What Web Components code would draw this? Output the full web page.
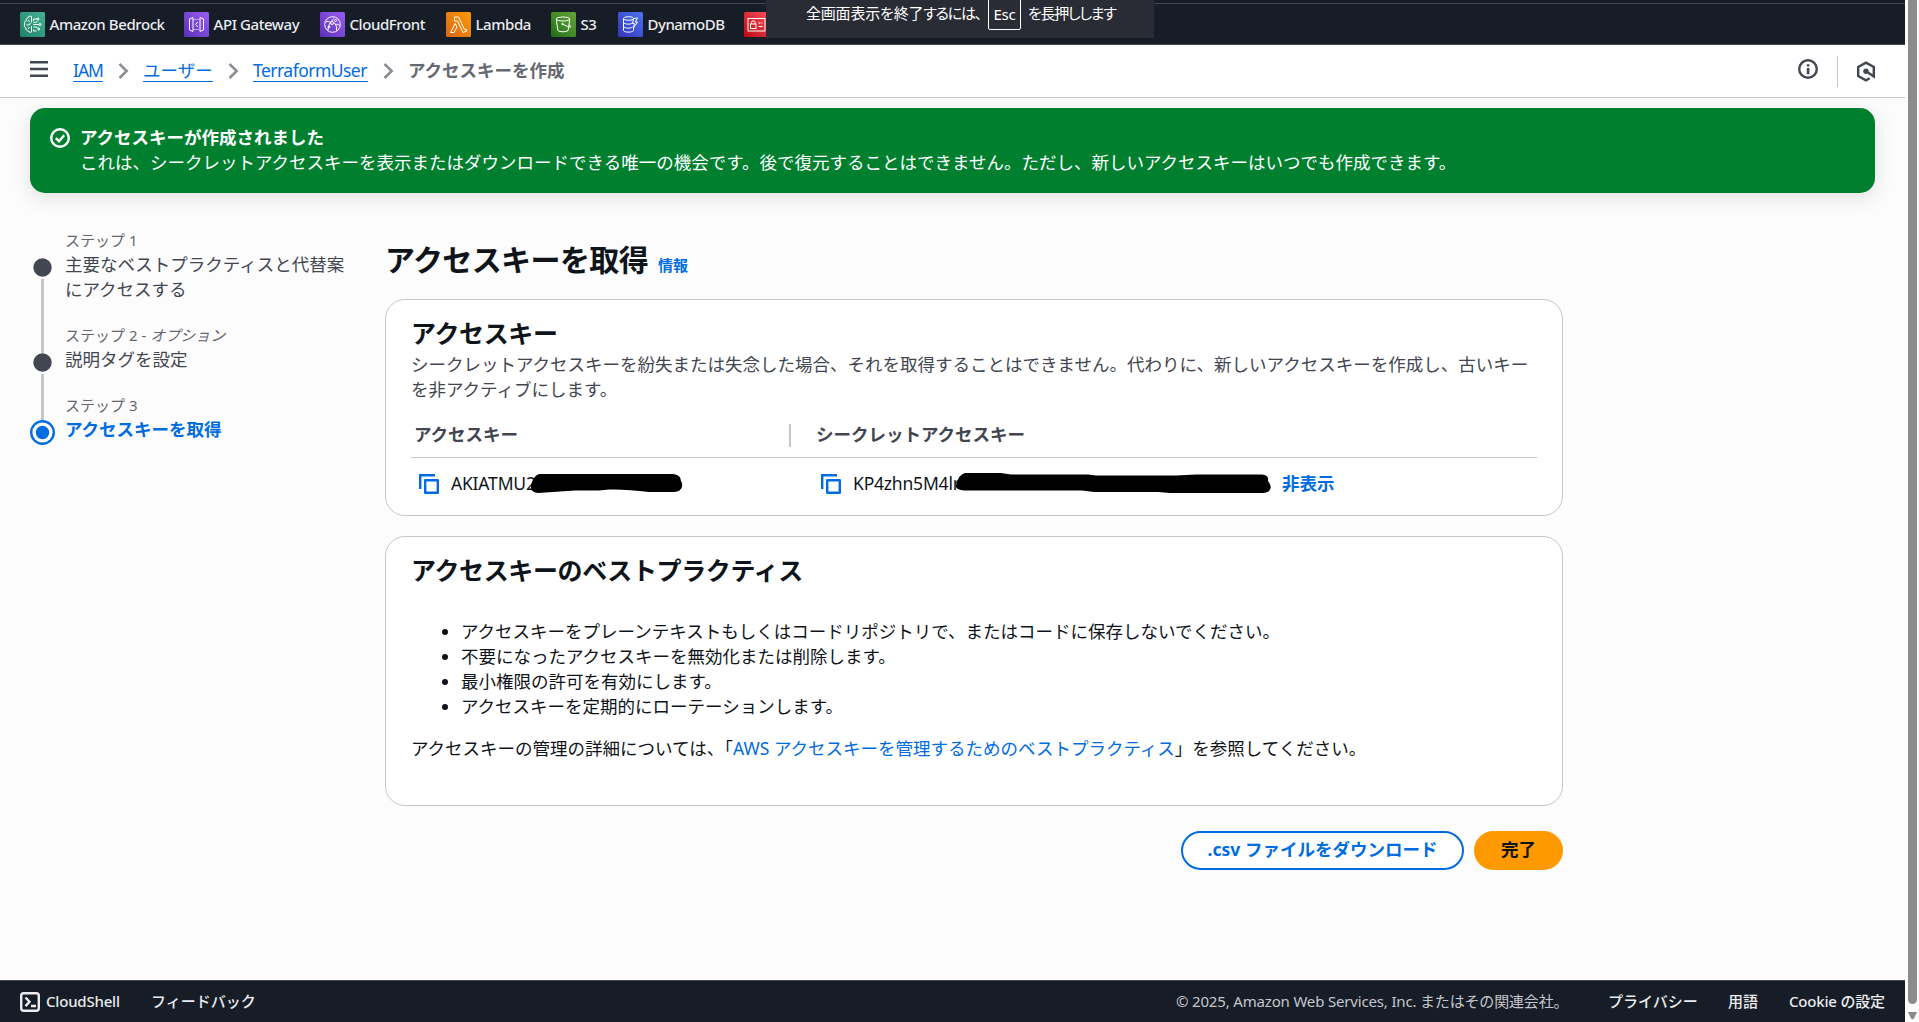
<!DOCTYPE html>
<html lang="ja">
<head>
<meta charset="utf-8">
<title>アクセスキーを作成 | IAM</title>
<style>
html,body{margin:0;height:100%;overflow:hidden}
body{font:17.5px/25px "Noto Sans","Noto Sans CJK JP",sans-serif;color:#0f141a;background:#fcfcfc}
</style>
</head>
<body>
<app-shell>
  <service-bar slot="top"></service-bar>
  <crumb-bar slot="crumbs"></crumb-bar>
  <flash-message heading="アクセスキーが作成されました">これは、シークレットアクセスキーを表示またはダウンロードできる唯一の機会です。後で復元することはできません。ただし、新しいアクセスキーはいつでも作成できます。</flash-message>
  <wizard-layout>
    <wizard-steps slot="nav">
      <wizard-step label="ステップ 1" lines="2">主要なベストプラクティスと代替案にアクセスする</wizard-step>
      <wizard-step label="ステップ 2 - " optional="オプション">説明タグを設定</wizard-step>
      <wizard-step label="ステップ 3" active>アクセスキーを取得</wizard-step>
    </wizard-steps>
    <page-heading info="情報">アクセスキーを取得</page-heading>
    <ui-card heading="アクセスキー" style="height:217px">
      <key-table></key-table>
    </ui-card>
    <ui-card heading="アクセスキーのベストプラクティス" style="height:270px">
      <best-practices></best-practices>
    </ui-card>
    <button-row>
      <ui-button>.csv ファイルをダウンロード</ui-button>
      <ui-button primary>完了</ui-button>
    </button-row>
  </wizard-layout>
  <console-footer slot="footer"></console-footer>
  <page-scrollbar slot="scroll"></page-scrollbar>
  <fullscreen-toast slot="toast"></fullscreen-toast>
</app-shell>

<script>
const define = (name, html) => customElements.define(name, class extends HTMLElement {
  constructor() {
    super();
    const root = this.attachShadow({ mode: 'open' });
    const t = document.createElement('template');
    t.innerHTML = typeof html === 'function' ? html(this) : html;
    root.append(t.content.cloneNode(true));
  }
});

define('app-shell', `
<style>
:host{display:grid;position:relative;width:1919px;height:1022px;grid-template-columns:1905px 14px;grid-template-rows:45px 53px 1fr 42px;overflow:hidden;background:#fcfcfc}
main{min-height:0;padding:10px 30px 0;box-sizing:border-box}
slot[name=scroll]::slotted(*){grid-column:2;grid-row:1/5}
slot[name=footer]::slotted(*){grid-row:4;grid-column:1}
slot[name=top]::slotted(*){grid-row:1;grid-column:1}
slot[name=crumbs]::slotted(*){grid-row:2;grid-column:1}
main{grid-row:3;grid-column:1}
</style>
<slot name="top"></slot><slot name="crumbs"></slot><main><slot></slot></main><slot name="footer"></slot><slot name="scroll"></slot><slot name="toast"></slot>`);

const glyphs = {
  bedrock: ['#1f8068', '#45b294', '<path d="M11.5 4.5c-2-1-3.500.2-3.500 1.500-1.500 0-2.200 1.500-1.600 2.600C4.300 9.300 4 11 4.800 12c-1 1.500-.5 3.300 1.200 4-.4 2 1 3 2.500 3 .6 1.500 2 1.700 3 1M11.500 4.500v6M11.500 14v6M8 8l1.500 2M6.500 13h2.500l1.500-2M8 17l1.500-2M13.500 9V7h3.500M13.500 10.500h2L17.500 9M13.500 12.500h5.500M13.500 15h3l1.500 1.500M13.500 17.500V19h3"/><circle cx="18" cy="7" r="1"/><circle cx="20" cy="12.500" r="1"/><circle cx="18.700" cy="17" r="1"/>'],
  gateway: ['#5a30b5', '#9a5cf7', '<path d="M9 5.500v14L5.500 18V7zM16 5.500v14l3.500-1.500V7zM13.800 10l-2.300 2.500 2.300 2.500"/><path d="M9.500 7.500h6M9.500 17.500h6" stroke-dasharray="1 1"/>'],
  cloudfront: ['#5a30b5', '#9a5cf7', '<circle cx="12.500" cy="12.500" r="7.800"/><path d="M5.500 10c2-1 4-.5 5.500 1M8 18.500c0-4 1.500-8 6-12M14 10.500c2 2 3 4 2.500 8M15 12.500c2-.5 3.500 0 5 1"/><circle cx="12" cy="11" r="1.500"/><circle cx="15.500" cy="8.500" r="1"/><circle cx="9" cy="15" r="1"/>'],
  lambda: ['#d96613', '#fb9a09', '<path d="M8.500 5h4l6 12.500 1.500-.5.800 2-3.800 1.500-5.500-11.500h-3zM9.200 11.500l1.800 3.500-3 5.500H4.500z"/>'],
  s3: ['#1f6f18', '#65a637', '<ellipse cx="12" cy="7" rx="6.800" ry="2"/><path d="M5.200 7l1.700 11.500c2 1.800 8.200 1.800 10.200 0L18.800 7M11.500 12l5 2.500c4 1.500 4.500 0 1.500-2"/><circle cx="11.500" cy="12" r=".7"/>'],
  dynamo: ['#3334b9', '#4d72f3', '<ellipse cx="10.500" cy="6.500" rx="5" ry="1.800"/><path d="M5.500 6.500v12c1 2.200 9 2.200 10 0v-3M5.500 10.500c1 2 7 2.200 9 .5M5.500 14.500c1 2 7 2.200 9 .5M15.500 6.500l-1 5h2l-1 4.500 4-6h-2.300L19.500 6z"/>'],
  iam: ['#bd0816', '#f8525a', '<rect x="4" y="6.500" width="17" height="12.500"/><rect x="6.500" y="12" width="5.500" height="4.500"/><path d="M7.500 12v-1.500a1.700 1.700 0 0 1 3.500 0V12M14.500 11h2M17.500 11h1M14.500 14.500h4"/>']
};
let gid = 0;
define('service-icon', el => {
  const [a, b, p] = glyphs[el.getAttribute('kind')];
  const id = 'g' + gid++;
  return `<style>:host{display:block;width:25px;height:25px;flex:none}svg{display:block}</style>
<svg width="25" height="25" viewBox="0 0 25 25"><defs><linearGradient id="${id}" x1="0" y1="1" x2="1" y2="0"><stop stop-color="${a}"/><stop offset="1" stop-color="${b}"/></linearGradient></defs><rect width="25" height="25" rx="1.500" fill="url(#${id})"/><g fill="none" stroke="#fff" stroke-width="1">${p}</g></svg>`;
});
define('service-link', el => `<style>:host{display:flex;align-items:center;gap:4.500px;height:25px;flex:none;box-sizing:border-box}span{white-space:nowrap}</style><service-icon kind="${el.getAttribute('kind')}"></service-icon><span><slot></slot></span>`);

define('service-bar', `
<style>
:host{display:block;height:45px;box-sizing:border-box;background:#161d26;border-bottom:1px solid #424650;color:#ebebf0;font-size:15px;font-weight:500}
i{display:block;height:3px;border-bottom:1px solid #424650}
nav{display:flex;padding:8px 20px 0}
service-link{letter-spacing:-.42px}
</style>
<i></i>
<nav>
<service-link kind="bedrock" style="width:164px">Amazon Bedrock</service-link>
<service-link kind="gateway" style="width:136px">API Gateway</service-link>
<service-link kind="cloudfront" style="width:126px">CloudFront</service-link>
<service-link kind="lambda" style="width:105px">Lambda</service-link>
<service-link kind="s3" style="width:67px">S3</service-link>
<service-link kind="dynamo" style="width:126px;letter-spacing:-.5px">DynamoDB</service-link>
<service-link kind="iam"></service-link>
</nav>`);

define('crumb-bar', `
<style>
:host{display:flex;height:53px;box-sizing:border-box;background:#fff;border-bottom:1px solid #c6c6cd;padding:0 30px;align-items:flex-start}
svg{display:block;flex:none}
.menu{margin:16px 25px 0 0}
a{color:#006ce0;border-bottom:1px solid #006ce0;height:23px;line-height:25px;margin-top:13px;white-space:nowrap;letter-spacing:-.53px}
.c{margin:18px 14px 0 15px}
b{color:#656871;margin-top:13px;flex:1;font-weight:700}
.info{margin-top:14px}
hr{border:0;width:1px;height:31px;background:#c6c6cd;margin:11px 19px 0 19px}
.hex{margin-top:16px}
</style>
<svg class="menu" width="18" height="16" fill="#424650"><path d="M0 0h18v2.500H0zM0 6.800h18v2.400H0zM0 13.500h18V16H0z"/></svg>
<a style="letter-spacing:-1px;width:30px">IAM</a>
<svg class="c" width="11" height="16" fill="none" stroke="#8c8c94" stroke-width="2.500"><path d="M1.500 1l7.200 7-7.200 7"/></svg>
<a style="letter-spacing:0;width:70px">ユーザー</a>
<svg class="c" width="11" height="16" fill="none" stroke="#8c8c94" stroke-width="2.500"><path d="M1.500 1l7.200 7-7.200 7"/></svg>
<a style="width:115px">TerraformUser</a>
<svg class="c" width="11" height="16" fill="none" stroke="#8c8c94" stroke-width="2.500"><path d="M1.500 1l7.200 7-7.200 7"/></svg>
<b>アクセスキーを作成</b>
<svg class="info" width="20" height="20"><circle cx="10" cy="10" r="8.800" fill="none" stroke="#424650" stroke-width="2.400"/><path d="M8.800 5.200h2.600v2.300H8.800zM8.800 9h2.600v6.200H8.800z" fill="#424650"/></svg>
<hr>
<svg class="hex" width="18" height="21" viewBox="0 0 18 21"><path d="M12.700 17.300L9 19.300 1.200 15V6L9 1.700 16.800 6v9.500L9 10.300" fill="none" stroke="#424650" stroke-width="2.400"/><circle cx="9" cy="10.300" r="2.700" fill="#424650"/></svg>`);

define('flash-message', el => `
<style>
:host{display:flex;gap:10px;height:85px;box-sizing:border-box;padding:17px 20px;border-radius:15px;background:#00802f;color:#fff;box-shadow:0 5px 20px 1px rgba(0,7,22,.1)}
svg{flex:none;margin-top:3px}
b{display:block}
</style>
<svg width="20" height="20" fill="none" stroke="#fff" stroke-width="2.400"><circle cx="10" cy="10" r="8.800"/><path d="M5.800 10.200l3.200 3 5.200-6"/></svg>
<div><b>${el.getAttribute('heading')}</b><slot></slot></div>`);

define('wizard-layout', `
<style>
:host{display:grid;grid-template-columns:325px 1178px;column-gap:30px;padding-top:37px}
section{display:flex;flex-direction:column;gap:20px}
</style>
<slot name="nav"></slot><section><slot></slot></section>`);
define('wizard-steps', `<style>:host{display:flex;flex-direction:column;gap:23.500px;width:325px}</style><slot></slot>`);
define('wizard-step', el => {
  const active = el.hasAttribute('active'), line = el.getAttribute('lines') ? 74 : 46;
  return `
<style>
:host{display:grid;grid-template-columns:25px 280px;column-gap:10px}
.r{display:flex;flex-direction:column;align-items:center;height:0;padding-top:${active ? 24.5 : 28}px;box-sizing:border-box;overflow:visible}
.r svg{display:block;flex:none}
.l{width:3px;height:${line}px;margin-top:2px;background:#c6c6cd;flex:none}
small{display:block;font-size:15px;line-height:20px;height:21.500px;color:#656871}
em{font-style:italic}
span{display:block;color:${active ? '#006ce0;font-weight:700' : '#424650'}}
</style>
<div class="r">${active
    ? '<svg width="25" height="25"><circle cx="12.500" cy="12.500" r="11.300" fill="none" stroke="#006ce0" stroke-width="2.400"/><circle cx="12.500" cy="12.500" r="6.700" fill="#006ce0"/></svg>'
    : '<svg width="19" height="19"><circle cx="9.500" cy="9.500" r="9.200" fill="#424650"/></svg><div class="l"></div>'}</div>
<div><small>${el.getAttribute('label')}<em>${el.getAttribute('optional') || ''}</em></small><span><slot></slot></span></div>`;
});

define('page-heading', el => `
<style>
:host{display:flex;align-items:baseline;gap:10px;height:49px}
h1{margin:0;padding-top:10.500px;font-size:30px;line-height:37.500px;letter-spacing:-.6px;height:38px}
a{font-size:15px;font-weight:700;color:#006ce0}
</style><h1><slot></slot></h1><a>${el.getAttribute('info')}</a>`);

define('ui-card', el => `
<style>
:host{display:block;box-sizing:border-box;border:1px solid #c6c6cd;border-radius:20px;background:#fff;padding:18px 25px 0}
h2{margin:0;font-size:25px;line-height:30px;letter-spacing:-.37px}
</style><h2>${el.getAttribute('heading')}</h2><slot></slot>`);

define('copy-icon', `<style>:host{display:block;flex:none;width:20px;height:20px}svg{display:block}</style>
<svg width="20" height="20" fill="none" stroke="#006ce0" stroke-width="2.400"><path d="M1.200 15V1.200H16"/><rect x="6.200" y="6.200" width="12.600" height="12.600" stroke-linejoin="round"/></svg>`);

define('key-table', `
<style>
:host{display:block}
p{margin:4px 0 0 0;color:#424650}
.g{display:grid;grid-template-columns:402px 1fr}
.h{height:47px;align-items:center;border-bottom:1px solid #c6c6cd;color:#424650;font-weight:700;margin-top:9px;box-sizing:border-box}
.h span:first-child{position:relative;margin-left:3px;padding:0}
.h span:first-child::after{content:"";position:absolute;right:22px;top:2px;width:2px;height:23px;background:#c6c6cd}
.h span+span{margin-left:3px}
.k{display:flex;align-items:center;height:51px;padding-left:8px;white-space:nowrap}
.k span{margin-left:12px;height:26px}
.k svg{flex:none;display:block}
.k a{color:#006ce0;font-weight:700;margin-left:10px;height:26px}
</style>
<p>シークレットアクセスキーを紛失または失念した場合、それを取得することはできません。代わりに、新しいアクセスキーを作成し、古いキーを非アクティブにします。</p>
<div class="g h"><span>アクセスキー</span><span>シークレットアクセスキー</span></div>
<div class="g">
<div class="k"><copy-icon></copy-icon><span style="width:80px;letter-spacing:-.2px">AKIATMU2</span>
<svg width="152" height="19" style="position:relative"><path d="M8 0H142Q150 1 150 7Q153 12 149 16Q147 18 140 18H118Q95 15 78 15.500L68 16.500H44L7 19Q-1 18 0 12Q2 2 8 0Z"/></svg></div>
<div class="k"><copy-icon></copy-icon><span style="width:103px;letter-spacing:-.2px">KP4zhn5M4lr</span>
<svg width="316" height="21" style="position:relative"><path d="M9 0H45L55 1.500H132L140 2.500H220L240 1.500H306Q313 2 312 8Q317 14 313 18Q311 20 305 20H214L202 19H138L126 17.500H8Q-1 17 0 12Q3 1 9 0Z"/></svg><a>非表示</a></div>
</div>`);

define('best-practices', `
<style>
:host{display:block}
ul{margin:34px 0 0;padding:0 0 0 50px}
p{margin:17px 0 0}
a{color:#006ce0}
</style>
<ul><li>アクセスキーをプレーンテキストもしくはコードリポジトリで、またはコードに保存しないでください。</li><li>不要になったアクセスキーを無効化または削除します。</li><li>最小権限の許可を有効にします。</li><li>アクセスキーを定期的にローテーションします。</li></ul>
<p>アクセスキーの管理の詳細については、「<a>AWS アクセスキーを管理するためのベストプラクティス</a>」を参照してください。</p>`);

define('button-row', `<style>:host{display:flex;justify-content:flex-end;gap:10px;margin-top:5px}</style><slot></slot>`);
define('ui-button', el => {
  const p = el.hasAttribute('primary');
  return `<style>:host{display:flex;align-items:center;justify-content:center;box-sizing:border-box;width:${p ? 89 : 283}px;height:39px;border-radius:20px;font-weight:700;white-space:nowrap;${p ? 'background:#ff9900;color:#0f141a' : 'background:#fff;color:#006ce0;border:2px solid #006ce0'}}span{height:27px}</style><span><slot></slot></span>`;
});

define('console-footer', `
<style>
:host{display:flex;align-items:center;box-sizing:border-box;height:42px;border-top:1px solid #424650;background:#161d26;color:#ebebf0;font-size:15px;line-height:20px;padding:0 20px;white-space:nowrap;font-weight:500}
svg{display:block;margin-right:6px}
span{height:22px}
.cs{letter-spacing:-.2px;width:105px}
.sp{flex:1}
.cp{color:#c6c6cd;width:432px;font-weight:400;letter-spacing:-.17px}
</style>
<svg width="20" height="20" fill="none" stroke="#ebebf0" stroke-width="2.400"><rect x="1.200" y="1.200" width="17.600" height="17.600" rx="2.500"/><path d="M5.500 5.500l4 4.300-4 4.300M11 14h5"/></svg>
<span class="cs">CloudShell</span><span>フィードバック</span><span class="sp"></span>
<span class="cp">© 2025, Amazon Web Services, Inc. またはその関連会社。</span>
<span style="width:120px">プライバシー</span><span style="width:61px">用語</span><span style="width:96px;letter-spacing:-.2px">Cookie の設定</span>`);

define('page-scrollbar', `
<style>:host{display:flex;flex-direction:column;align-items:center;background:#fcfcfc;padding-left:1px}
i{width:9px;height:1004px;background:#8b8b8b;border-radius:0 0 4.500px 4.500px}svg{margin-top:8px}</style>
<i></i><svg width="9" height="8"><path d="M0 0h9L6 6.500Q4.500 8 3 6.500z" fill="#8b8b8b"/></svg>`);

define('fullscreen-toast', `
<style>
:host{position:absolute;left:766px;top:0;width:388px;height:38px;box-sizing:border-box;padding-left:40px;display:flex;background:#2a2c35;color:#fff;font:15px/20px "Noto Sans CJK JP",sans-serif;white-space:nowrap}
span{font-feature-settings:"palt";margin-top:3px}
.a{width:182px;letter-spacing:-.2px}
.n{letter-spacing:-1.250px}
kbd{font:15px/20px "Noto Sans",sans-serif;letter-spacing:-.2px;box-sizing:border-box;width:33px;height:34px;margin-top:-4px;padding-top:7px;text-align:center;border:1px solid #fff;border-radius:2px}
.b{margin-left:7px;letter-spacing:-1.300px}
</style>
<span class="a">全画面表示を終了<span class="n">するには、</span></span><kbd>Esc</kbd><span class="b">を長押しします</span>`);
</script>
</body>
</html>
